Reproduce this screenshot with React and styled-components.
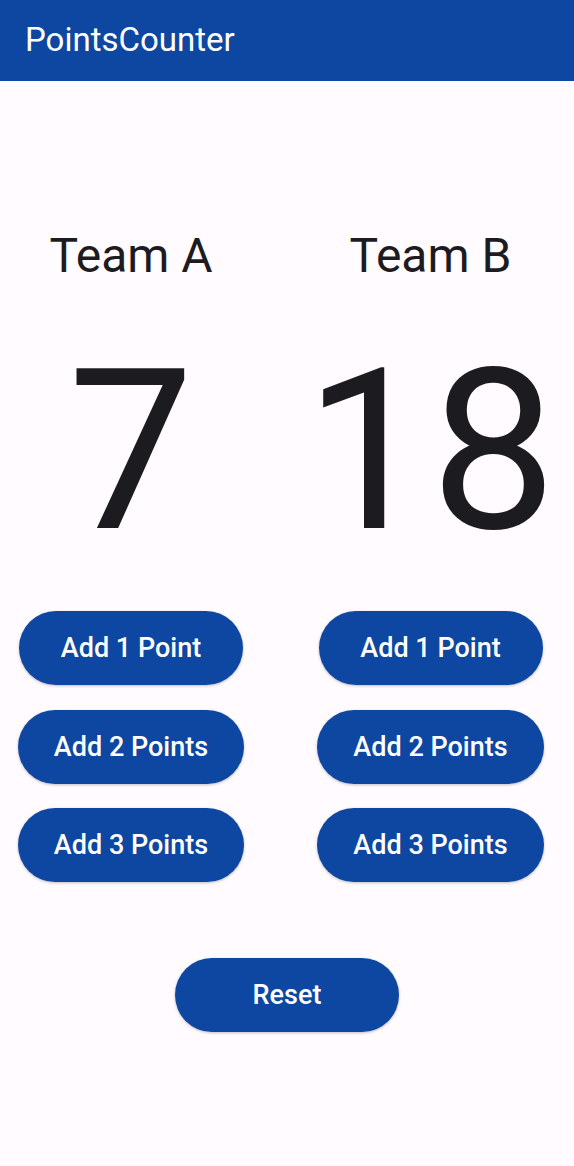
import React, { useState } from "react";
import styled, { createGlobalStyle } from "styled-components";

const Global = createGlobalStyle`
  html, body { margin: 0; padding: 0; background: #FFFBFE; }
  body { font-family: Roboto, "Noto Sans", sans-serif; }
  * { box-sizing: border-box; }
`;

const Page = styled.div`
  width: 574px;
  min-height: 1166px;
  background: #FFFBFE;
  display: flex;
  flex-direction: column;
`;

const AppBar = styled.header`
  height: 81px;
  background: #0D47A1;
  display: flex;
  align-items: center;
  padding-left: 25px;
`;

const Title = styled.h1`
  margin: 0;
  font-family: Roboto, sans-serif;
  font-weight: 400;
  font-size: 33px;
  line-height: 38px;
  margin-top: -2px;
  color: #ffffff;
`;

const Teams = styled.div`
  display: flex;
  padding-left: 17px;
  gap: 71.5px;
  margin-top: 145px;
`;

const TeamColumn = styled.section`
  width: 228px;
  display: flex;
  flex-direction: column;
  align-items: center;
`;

const TeamName = styled.h2`
  margin: 0;
  font-weight: 400;
  font-size: 48px;
  line-height: 60px;
  color: #1C1B1F;
  white-space: nowrap;
`;

const Score = styled.div`
  margin-top: 53.5px;
  font-size: 224px;
  line-height: 224px;
  color: #1C1B1F;
  white-space: nowrap;
`;

const ButtonStack = styled.div`
  margin-top: 47.6px;
  display: flex;
  flex-direction: column;
  align-items: center;
  gap: 24.5px;
`;

const PillButton = styled.button`
  height: 74px;
  min-width: 224px;
  padding: 0 36px;
  border: none;
  border-radius: 37px;
  background: #0D47A1;
  color: #ffffff;
  font-family: Roboto, sans-serif;
  font-weight: 500;
  font-size: 27px;
  white-space: nowrap;
  box-shadow: 0 1px 3px rgba(0, 0, 0, 0.25);
  cursor: pointer;
`;

const Footer = styled.div`
  display: flex;
  justify-content: center;
  margin-top: 76px;
`;

function Team({ name, score, onAdd }) {
  return (
    <TeamColumn>
      <TeamName>{name}</TeamName>
      <Score>{score}</Score>
      <ButtonStack>
        <PillButton onClick={() => onAdd(1)}>Add 1 Point</PillButton>
        <PillButton onClick={() => onAdd(2)}>Add 2 Points</PillButton>
        <PillButton onClick={() => onAdd(3)}>Add 3 Points</PillButton>
      </ButtonStack>
    </TeamColumn>
  );
}

export default function App() {
  const [a, setA] = useState(7);
  const [b, setB] = useState(18);
  return (
    <Page>
      <Global />
      <AppBar>
        <Title>PointsCounter</Title>
      </AppBar>
      <Teams>
        <Team name="Team A" score={a} onAdd={(n) => setA(a + n)} />
        <Team name="Team B" score={b} onAdd={(n) => setB(b + n)} />
      </Teams>
      <Footer>
        <PillButton onClick={() => { setA(0); setB(0); }}>Reset</PillButton>
      </Footer>
    </Page>
  );
}
